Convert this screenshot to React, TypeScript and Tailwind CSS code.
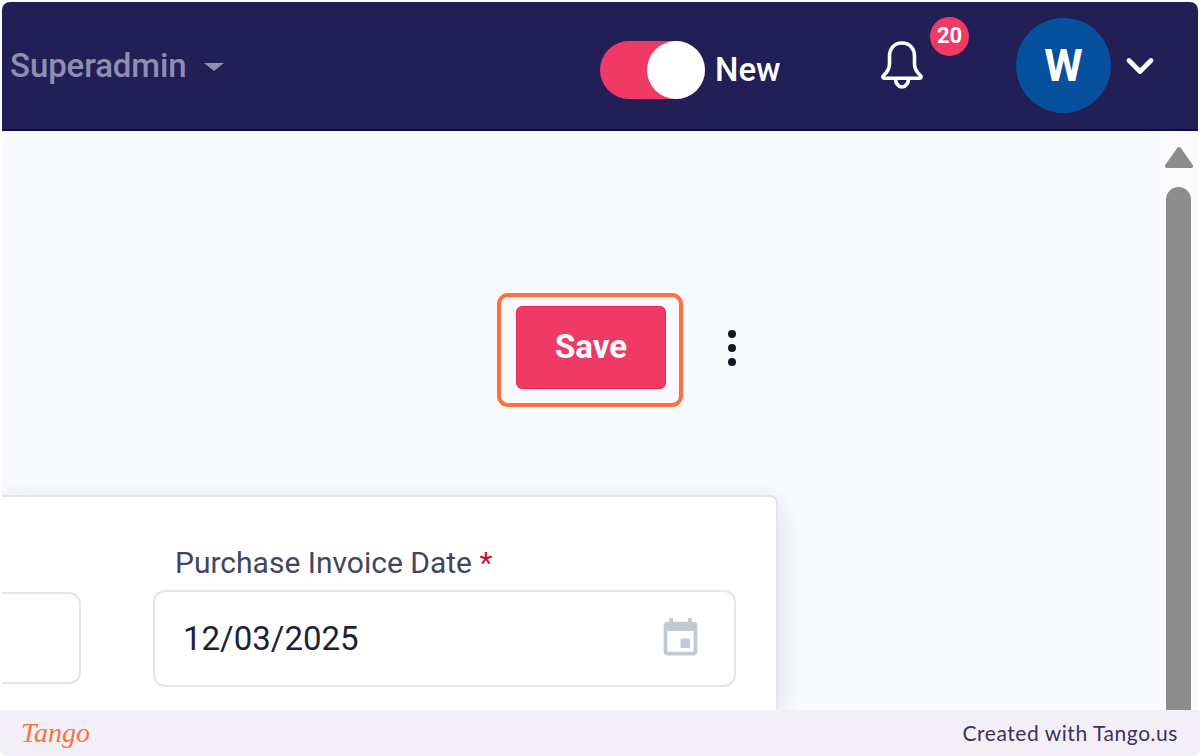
import React from 'react';
import { ChevronDown } from 'lucide-react';

const BellIcon = () => (
  <svg width="44" height="50" viewBox="0 0 44 50" fill="none" stroke="currentColor" strokeWidth="3.6" strokeLinecap="round" strokeLinejoin="round">
    <path d="M22 3c-8 0-12.500 6-12.500 13v8c0 5-2 8-6 11.500-1.200 1.200-.6 2.700 1 2.700h35c1.600 0 2.200-1.500 1-2.700-4-3.500-6-6.500-6-11.500v-8C34.500 9 30 3 22 3z" />
    <path d="M15.500 39c0 4.500 3 8 6.500 8s6.500-3.500 6.500-8" />
  </svg>
);

const CalendarIcon = () => (
  <svg width="45" height="45" viewBox="0 0 24 24" fill="#c3c9d3">
    <path d="M17 12h-5v5h5v-5zM16 1v2H8V1H6v2H5c-1.110 0-1.990.9-1.990 2L3 19c0 1.100.89 2 2 2h14c1.100 0 2-.9 2-2V5c0-1.100-.9-2-2-2h-1V1h-2zm3 18H5V8h14v11z" />
  </svg>
);

const ScrollUpArrow = () => (
  <svg width="28" height="22" viewBox="0 0 28 22" fill="#8c8c8c" stroke="#8c8c8c" strokeWidth="4" strokeLinejoin="round" className="ml-[4px]">
    <path d="M14 3L26 20H2z" />
  </svg>
);

const Header = () => (
  <header className="h-[129px] shrink-0 flex items-center bg-[#221f57] border-b-2 border-[#0e0b4a] rounded-tl-lg rounded-tr-lg font-['Roboto',sans-serif]">
    <div className="flex items-center ml-[8px] w-[590px]">
      <span className="text-[33px] font-medium tracking-[-0.1px] text-[#8f8db2] leading-none">Superadmin</span>
      <span className="ml-[17px] mt-[2px] w-0 h-0 border-x-[10px] border-x-transparent border-t-[8px] border-t-[#8f8db2]" />
    </div>
    <div className="relative w-[105px] h-[58px] mt-[8px] rounded-full bg-[#f03a66] flex justify-end">
      <div className="w-[58px] h-[58px] rounded-full bg-white" />
    </div>
    <span className="ml-[10px] w-[66px] mt-[8px] text-[33px] font-medium text-white leading-none">New</span>
    <div className="relative ml-[99px] -mt-[2px] text-white">
      <BellIcon />
      <span className="absolute left-[50px] -top-[23px] w-[39px] h-[39px] rounded-full bg-[#f03a66] flex items-center justify-center text-[22px] font-bold text-white leading-none">20</span>
    </div>
    <div className="ml-[92px] w-[95px] h-[95px] rounded-full bg-[#07509e] flex items-center justify-center text-[44px] font-bold text-white leading-none">W</div>
    <ChevronDown className="ml-[7px] text-white" size={44} strokeWidth={2.6} />
  </header>
);

const Scrollbar = () => (
  <div className="w-[42px] shrink-0 flex flex-col items-center pt-[15px] bg-[#fbfbfd]">
    <ScrollUpArrow />
    <div className="mt-[19px] w-[25px] flex-1 ml-[3px] rounded-t-full bg-[#8c8c8c]" />
  </div>
);

const Actions = () => (
  <div className="flex items-center ml-[495px] mt-[162px]">
    <div className="w-[186px] h-[114px] border-4 border-[#ff7240] rounded-[11px] pl-[15px] pt-[9px]">
      <button className="w-[150px] h-[83px] pb-[3px] rounded-md bg-[#f03a66] border border-[#f0235a] text-white text-[33px] font-bold leading-none font-['Roboto',sans-serif]">Save</button>
    </div>
    <div className="ml-[45px] -mt-[5px] flex flex-col gap-[6px]">
      <span className="block w-[8px] h-[8px] rounded-full bg-[#111827]" />
      <span className="block w-[8px] h-[8px] rounded-full bg-[#111827]" />
      <span className="block w-[8px] h-[8px] rounded-full bg-[#111827]" />
    </div>
  </div>
);

const InvoiceCard = () => (
  <div className="mt-[88px] w-[776px] flex-1 bg-white border-t-2 border-r-2 border-[#e4e5e8] rounded-tr-lg shadow-[0_8px_28px_rgba(40,40,80,0.14)] flex font-['Roboto',sans-serif]">
    <div className="w-[79px] shrink-0 h-[92px] mt-[95px] border-y-2 border-r-2 border-[#e6e6e6] rounded-r-xl" />
    <div className="ml-[72px] w-[583px] shrink-0 pt-[49px]">
      <div className="pl-[22px] h-[44px] text-[30px] leading-[34px] text-[#43455f]">
        Purchase Invoice Date <span className="text-[#c8102e]">*</span>
      </div>
      <div className="h-[97px] border-2 border-[#e6e6e6] rounded-xl flex items-center justify-between pl-[28px] pr-[31px]">
        <span className="text-[33px] text-[#1c2333] leading-none">12/03/2025</span>
        <CalendarIcon />
      </div>
    </div>
  </div>
);

const Footer = () => (
  <footer className="h-[46px] shrink-0 bg-[#f2f0f6] rounded-b-lg flex items-center justify-between pl-[21px] pr-[22px]">
    <span className="text-[28px] italic leading-none text-[#ff7240] font-['Liberation_Serif',serif]">Tango</span>
    <span className="text-[21px] tracking-[0.55px] text-[#3f2f5f] font-['Lato',sans-serif]">Created with Tango.us</span>
  </footer>
);

export default function App() {
  return (
    <div className="w-[1200px] h-[756px] flex flex-col bg-white overflow-hidden">
      <div className="flex-1 min-h-0 flex flex-col pt-[2px] pl-[2px] pr-[2px]">
        <Header />
        <div className="flex-1 min-h-0 flex bg-[#f9fafe]">
          <main className="flex-1 min-w-0 flex flex-col overflow-hidden">
            <Actions />
            <InvoiceCard />
          </main>
          <Scrollbar />
        </div>
      </div>
      <Footer />
    </div>
  );
}
